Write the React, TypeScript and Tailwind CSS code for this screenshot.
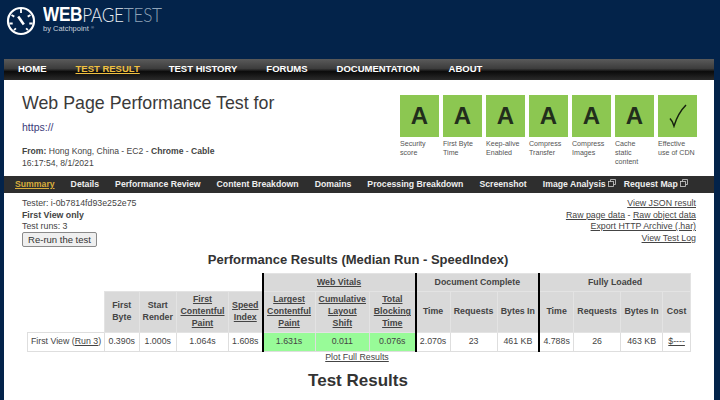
const grades = [
  { grade: 'A', label: ['Security', 'score'] },
  { grade: 'A', label: ['First Byte', 'Time'] },
  { grade: 'A', label: ['Keep-alive', 'Enabled'] },
  { grade: 'A', label: ['Compress', 'Transfer'] },
  { grade: 'A', label: ['Compress', 'Images'] },
  { grade: 'A', label: ['Cache', 'static', 'content'] },
  { grade: '✓', label: ['Effective', 'use of CDN'] },
];

const mainNav = ['HOME', 'TEST RESULT', 'TEST HISTORY', 'FORUMS', 'DOCUMENTATION', 'ABOUT'];

const subNav = [
  { name: 'Summary', active: true },
  { name: 'Details' },
  { name: 'Performance Review' },
  { name: 'Content Breakdown' },
  { name: 'Domains' },
  { name: 'Processing Breakdown' },
  { name: 'Screenshot' },
  { name: 'Image Analysis', ext: true },
  { name: 'Request Map', ext: true },
];

function ExternalIcon() {
  return (
    <svg width="8" height="8" viewBox="0 0 8 8" fill="none" stroke="#cfcfcf" strokeWidth="0.8" className="ml-[2px] mb-[3px] -mr-[8px] inline-block">
      <rect x="0.5" y="2.5" width="5" height="5" />
      <path d="M2.5 2.5V0.5H7.5V5.5H5.5" />
    </svg>
  );
}

function Logo() {
  return (
    <div className="flex items-start pl-[6px] pt-[6px] h-[59px] text-white">
      <svg width="30" height="30" viewBox="0 0 30 30" fill="none" stroke="#fff">
        <circle cx="15" cy="15" r="13" strokeWidth="2.2" />
        <path d="M15 3v4M5.5 9l2.8 1.6M24.5 9l-2.8 1.6M3.5 17.5h3.2M23.3 17.5h3.2M8 24l2-1.6M22 24l-2-1.6" strokeWidth="1.8" />
        <path d="M12.2 10.5l5.6 8" strokeWidth="2.6" />
      </svg>
      <div className="ml-[7px] flex flex-col">
        <div className="flex h-[17px] w-[118px] origin-left scale-x-[0.88] items-center text-[19.5px] leading-[17px] tracking-[-0.3px]">
          <span className="font-bold">WEB</span>
          <span className="font-['Lato',sans-serif] font-light text-[#e8edf2]">PAGE</span>
          <span className="font-['Lato',sans-serif] font-light text-[#8fa3b8]">TEST</span>
        </div>
        <div className="mt-[1px] text-[7.5px] leading-[9px] text-[#c6d0db]">
          by Catchpoint <sup className="text-[4px]">®</sup>
        </div>
      </div>
    </div>
  );
}

const th = 'bg-[#d9d9d9] border border-[#e3e3e3] font-bold text-[#444] px-0 align-middle';
const td = 'border border-[#dedede] text-[#444] font-normal text-center align-middle';
const blackL = 'border-l-2 border-l-black';

function ResultsTable() {
  return (
    <table className="table-fixed border-collapse ml-[23px] mt-[5px] w-[663px] text-[8.8px] leading-[11.7px] text-center">
      <colgroup>
        <col className="w-[77px]" />
        <col className="w-[34.5px]" />
        <col className="w-[37.5px]" />
        <col className="w-[52px]" />
        <col className="w-[34px]" />
        <col className="w-[52.5px]" />
        <col className="w-[54.5px]" />
        <col className="w-[46px]" />
        <col className="w-[34.5px]" />
        <col className="w-[47px]" />
        <col className="w-[42px]" />
        <col className="w-[34.5px]" />
        <col className="w-[47px]" />
        <col className="w-[42px]" />
        <col className="w-[28px]" />
      </colgroup>
      <thead>
        <tr className="h-[18px]">
          <th colSpan={5} className="border-0 bg-white" />
          <th colSpan={3} className={`${th} ${blackL}`}><span className="underline">Web Vitals</span></th>
          <th colSpan={3} className={`${th} ${blackL}`}>Document Complete</th>
          <th colSpan={4} className={`${th} ${blackL}`}>Fully Loaded</th>
        </tr>
        <tr className="h-[41px]">
          <th className="border-0 bg-white" />
          <th className={th}>First<br />Byte</th>
          <th className={th}>Start<br />Render</th>
          <th className={th}><span className="underline">First<br />Contentful<br />Paint</span></th>
          <th className={th}><span className="underline">Speed<br />Index</span></th>
          <th className={`${th} ${blackL}`}><span className="underline">Largest<br />Contentful<br />Paint</span></th>
          <th className={th}><span className="underline">Cumulative<br />Layout<br />Shift</span></th>
          <th className={th}><span className="underline">Total<br />Blocking<br />Time</span></th>
          <th className={`${th} ${blackL}`}>Time</th>
          <th className={th}>Requests</th>
          <th className={th}>Bytes In</th>
          <th className={`${th} ${blackL}`}>Time</th>
          <th className={th}>Requests</th>
          <th className={th}>Bytes In</th>
          <th className={th}>Cost</th>
        </tr>
      </thead>
      <tbody>
        <tr className="h-[19px]">
          <td className={td}>First View (<span className="underline">Run 3</span>)</td>
          <td className={td}>0.390s</td>
          <td className={td}>1.000s</td>
          <td className={td}>1.064s</td>
          <td className={td}>1.608s</td>
          <td className={`${td} ${blackL} bg-[#98fb98]`}>1.631s</td>
          <td className={`${td} bg-[#98fb98]`}>0.011</td>
          <td className={`${td} bg-[#98fb98]`}>0.076s</td>
          <td className={`${td} ${blackL}`}>2.070s</td>
          <td className={td}>23</td>
          <td className={td}>461 KB</td>
          <td className={`${td} ${blackL}`}>4.788s</td>
          <td className={td}>26</td>
          <td className={td}>463 KB</td>
          <td className={td}><span className="underline">$----</span></td>
        </tr>
      </tbody>
    </table>
  );
}

export default function App() {
  return (
    <div className="w-[720px] h-[400px] overflow-hidden bg-[#03234a] font-['Liberation_Sans',Arial,sans-serif]">
      <Logo />

      <nav className="ml-[4px] mr-[6px] h-[21px] flex items-center gap-[29px] whitespace-nowrap pl-[14px] pb-[1px] bg-[linear-gradient(#5a5a5a_0%,#3d3d3d_45%,#0b0b0b_60%,#2a2a2a_100%)] text-[9.5px] font-bold text-white">
        {mainNav.map((item) => (
          <span key={item} className={item === 'TEST RESULT' ? 'text-[#f0c040] underline' : ''}>
            {item}
          </span>
        ))}
      </nav>

      <main className="ml-[4px] mr-[6px] h-[320px] bg-white text-[#444]">
        <div className="flex h-[96px]">
          <div className="w-[396px] pl-[18px] pt-[11px]">
            <h1 className="text-[17.8px] leading-[24px] font-normal text-[#3a3a3a]">Web Page Performance Test for</h1>
            <div className="mt-[5px] text-[10.5px] leading-[14px] text-[#3b3a78]">https://</div>
            <div className="mt-[11px] text-[8.6px] leading-[12px] text-[#444]">
              <div>
                <b>From:</b> Hong Kong, China - EC2 - <b>Chrome</b> - <b>Cable</b>
              </div>
              <div>16:17:54, 8/1/2021</div>
            </div>
          </div>
          <div className="flex gap-[4px] pt-[15px]">
            {grades.map((g, i) => (
              <div key={i} className="w-[39px]">
                <div className="h-[42px] bg-[#8cc751] flex items-center justify-center text-[24px] font-bold text-[#222e1c]">
                  {g.grade === '✓' ? (
                    <svg width="20" height="24" viewBox="0 0 20 24" fill="none" stroke="#16200f" strokeWidth="1.5">
                      <path d="M2 14.5c1.5 1.5 3 4 4 7.5C8.5 14 12 7 18 1" />
                    </svg>
                  ) : (
                    g.grade
                  )}
                </div>
                <div className="mt-[3px] whitespace-nowrap text-[7.1px] leading-[9px] text-[#555]">
                  {g.label.map((l) => (
                    <div key={l}>{l}</div>
                  ))}
                </div>
              </div>
            ))}
          </div>
        </div>

        <div className="h-[17px] flex items-center gap-[16px] whitespace-nowrap bg-[#2e2e2e] pl-[11px] text-[8.7px] font-bold text-[#eee]">
          {subNav.map((s) => (
            <span key={s.name} className={s.active ? 'text-[#d9ad3c] underline' : ''}>
              {s.name}
              {s.ext && <ExternalIcon />}
            </span>
          ))}
        </div>

        <div className="flex justify-between pl-[18px] pr-[18px] pt-[5px] text-[8.8px] leading-[11.5px]">
          <div>
            <div>Tester: i-0b7814fd93e252e75</div>
            <div className="font-bold">First View only</div>
            <div>Test runs: 3</div>
            <button className="-mt-[0.5px] block h-[15px] w-[75px] rounded-[2px] border border-[#8a8a8a] bg-[#efefef] text-[9.5px] leading-[13px] text-[#333]">
              Re-run the test
            </button>
          </div>
          <div className="text-right">
            <div className="underline">View JSON result</div>
            <div><span className="underline">Raw page data</span> - <span className="underline">Raw object data</span></div>
            <div className="underline">Export HTTP Archive (.har)</div>
            <div className="underline">View Test Log</div>
          </div>
        </div>

        <h2 className="mt-[5px] pr-[2px] text-center text-[13px] leading-[16px] font-bold text-[#333]">
          Performance Results (Median Run - SpeedIndex)
        </h2>

        <ResultsTable />

        <div className="pr-[4px] text-center text-[8.8px] leading-[11px] underline">Plot Full Results</div>
        <h2 className="mt-[8px] pr-[2px] text-center text-[17px] leading-[20px] font-bold text-[#333]">Test Results</h2>
      </main>
    </div>
  );
}
